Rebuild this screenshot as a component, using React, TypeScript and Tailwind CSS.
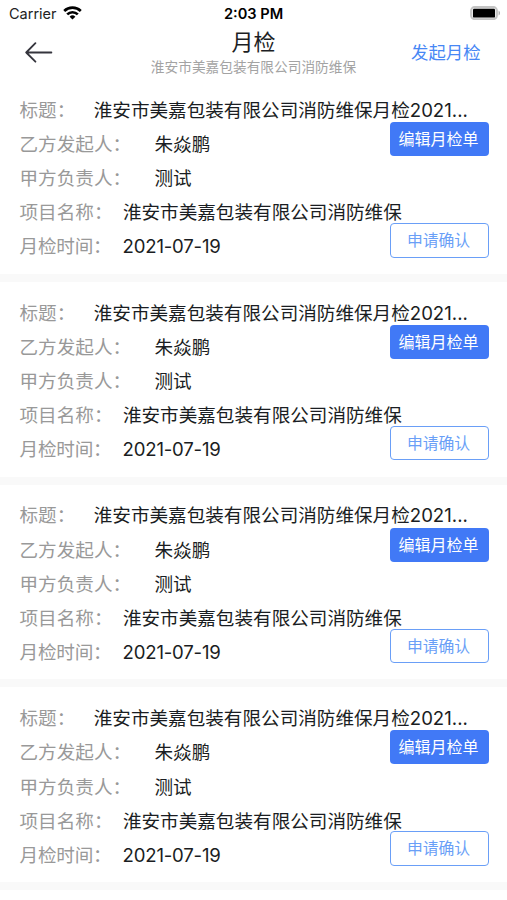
const project = "淮安市美嘉包装有限公司消防维保"

const records = [
  { id: 1, starter: "朱焱鹏", owner: "测试", date: "2021-07-19" },
  { id: 2, starter: "朱焱鹏", owner: "测试", date: "2021-07-19" },
  { id: 3, starter: "朱焱鹏", owner: "测试", date: "2021-07-19" },
  { id: 4, starter: "朱焱鹏", owner: "测试", date: "2021-07-19" },
]

function StatusBar() {
  return (
    <div className="grid h-[27px] grid-cols-3 items-center pl-[9px] pr-[6px] text-black">
      <div className="flex items-center gap-[6px]">
        <span className="pt-px text-[14.5px] leading-none text-[#222]">Carrier</span>
        <svg className="-mt-px" width="19" height="14" viewBox="0 0 19 14" fill="none" stroke="#000" strokeWidth="2.7">
          <path d="M1.2 5a12 12 0 0 1 16.6 0" />
          <path d="M4.2 8.4a7.6 7.6 0 0 1 10.6 0" />
          <path d="M9.5 13.6 6.6 10.7a4.2 4.2 0 0 1 5.8 0z" fill="#000" stroke="none" />
        </svg>
      </div>
      <span className="whitespace-nowrap pr-[3px] pt-px text-center text-[14.6px] font-semibold leading-none">2:03 PM</span>
      <svg className="-mt-[2px] justify-self-end" width="31" height="14" viewBox="0 0 31 14">
        <rect x="1" y="1" width="26" height="12.2" rx="3.6" fill="#e8e8e8" stroke="#c4c4c4" strokeWidth="1.8" />
        <rect x="3" y="2.8" width="22" height="8.8" rx="1.2" fill="#000" />
        <path d="M28.6 4.8c1.8.6 1.8 4 0 4.6z" fill="#aaa" />
      </svg>
    </div>
  )
}

function Header() {
  return (
    <header className="grid h-[52px] grid-cols-[130px_1fr_130px]">
      <button className="flex h-[50px] items-center pl-[25px]">
        <svg width="28" height="21" viewBox="0 0 28 21" fill="none" stroke="#35353d" strokeWidth="1.8" strokeLinecap="round" strokeLinejoin="round">
          <path d="M26.4 10.5H1.2M10.4 1.2 1.2 10.5l9.2 9.2" />
        </svg>
      </button>
      <div className="flex flex-col items-center whitespace-nowrap">
        <h1 className="pt-px text-[22px] leading-[29px] text-[#1c1e24]">月检</h1>
        <p className="text-[13.7px] leading-[21px] text-[#a3a3a3]">{project}</p>
      </div>
      <button className="flex h-[52px] items-center pl-[34px] text-[17.4px] text-[#4787f5]">发起月检</button>
    </header>
  )
}

function Row({ label, gap, value }: { label: string; gap: string; value: string }) {
  return (
    <div className="flex h-[34.2px] items-center whitespace-nowrap">
      <span className="text-[#999]">{label}</span>
      <span className={`${gap} text-[#999]`}>：</span>
      <span className="text-[#1a1d22]">{value}</span>
    </div>
  )
}

function Card({ starter, owner, date }: { starter: string; owner: string; date: string }) {
  return (
    <div className="relative h-[202.8px] border-b-8 border-[#f9f9f9] pl-[19.5px] pt-[14.6px] text-[18.6px]">
      <Row label="标题" gap="w-[37px]" value={`${project}月检2021...`} />
      <Row label="乙方发起人" gap="w-[42px]" value={starter} />
      <Row label="甲方负责人" gap="w-[42px]" value={owner} />
      <Row label="项目名称" gap="w-[29px]" value={project} />
      <div className="tracking-[-0.2px]">
        <Row label="月检时间" gap="w-[29.5px]" value={date} />
      </div>
      <button className="absolute right-[18px] top-[43px] h-[34px] w-[99px] rounded-[4px] bg-[#4179f6] pr-[2px] text-[16px] text-white">
        编辑月检单
      </button>
      <button className="absolute right-[18px] top-[144px] h-[34.5px] w-[99px] rounded-[4px] border-[1.5px] border-[#6a9ff7] pr-[2px] pt-px text-[15.8px] text-[#6a9ff7]">
        申请确认
      </button>
    </div>
  )
}

export default function App() {
  return (
    <div className="h-[900px] w-full overflow-hidden bg-white font-[Inter,'Noto_Sans_CJK_SC',sans-serif]">
      <StatusBar />
      <Header />
      <main>
        {records.map((r) => (
          <Card key={r.id} starter={r.starter} owner={r.owner} date={r.date} />
        ))}
      </main>
    </div>
  )
}
